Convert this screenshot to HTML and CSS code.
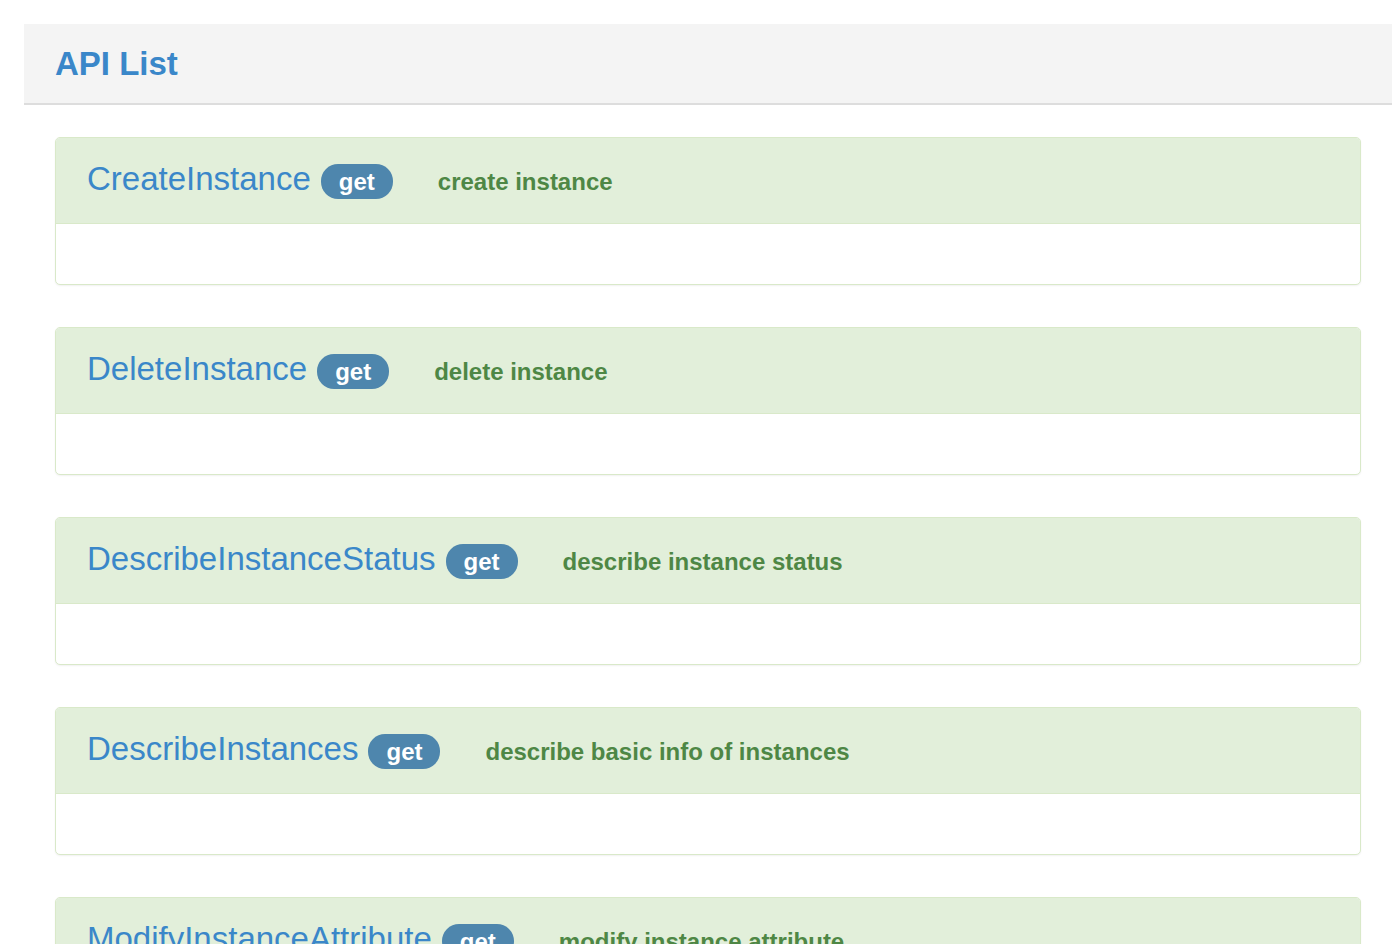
FILE: index.html
```html
<!DOCTYPE html>
<html>
<head>
<meta charset="utf-8">
<title>API List</title>
<link rel="stylesheet" href="styles.css">
</head>
<body>
<div class="page">
  <div class="header"><h1 class="header-title">API List</h1></div>
  <div class="list">
    <div class="panel">
      <div class="panel-heading">
        <span class="api-name">CreateInstance</span>
        <span class="badge">get</span>
        <span class="api-desc">create instance</span>
      </div>
      <div class="panel-body"></div>
    </div>
    <div class="panel">
      <div class="panel-heading">
        <span class="api-name">DeleteInstance</span>
        <span class="badge">get</span>
        <span class="api-desc">delete instance</span>
      </div>
      <div class="panel-body"></div>
    </div>
    <div class="panel">
      <div class="panel-heading">
        <span class="api-name">DescribeInstanceStatus</span>
        <span class="badge">get</span>
        <span class="api-desc">describe instance status</span>
      </div>
      <div class="panel-body"></div>
    </div>
    <div class="panel">
      <div class="panel-heading">
        <span class="api-name">DescribeInstances</span>
        <span class="badge">get</span>
        <span class="api-desc">describe basic info of instances</span>
      </div>
      <div class="panel-body"></div>
    </div>
    <div class="panel">
      <div class="panel-heading">
        <span class="api-name">ModifyInstanceAttribute</span>
        <span class="badge">get</span>
        <span class="api-desc">modify instance attribute</span>
      </div>
      <div class="panel-body"></div>
    </div>
  </div>
</div>
</body>
</html>
```
FILE: styles.css
```css
html, body {
  margin: 0;
  padding: 0;
  background: #ffffff;
  font-family: "Liberation Sans", Arial, Helvetica, sans-serif;
  overflow: hidden;
}
.page {
  padding: 24px 0 0 24px;
}
.header {
  background: #f4f4f4;
  border-bottom: 2px solid #dddddd;
  height: 79px;
  display: flex;
  align-items: center;
  padding-left: 31px;
}
.header-title {
  margin: 0;
  font-size: 33px;
  font-weight: bold;
  color: #3a87c9;
  line-height: 1;
}
.list {
  padding: 32px 31px 0 31px;
}
.panel {
  border: 1px solid #d9e9c9;
  border-radius: 5px;
  margin-bottom: 42px;
  box-shadow: 0 1px 2px rgba(0, 0, 0, 0.06);
  background: #ffffff;
  overflow: hidden;
}
.panel-heading {
  background: #e2efda;
  border-bottom: 1px solid #d9e9c9;
  display: flex;
  align-items: center;
  padding-left: 31px;
  padding-bottom: 4px;
  box-sizing: border-box;
  height: 86px;
}
.api-name {
  font-size: 33px;
  color: #3a87c9;
  line-height: 1;
}
.badge {
  margin-left: 10px;
  background: #4e86ad;
  color: #ffffff;
  font-weight: bold;
  font-size: 24px;
  line-height: 1;
  height: 35px;
  padding: 0 18px;
  border-radius: 17px;
  display: inline-flex;
  align-items: center;
  box-sizing: border-box;
  position: relative;
  top: 3px;
}
.api-desc {
  margin-left: 45px;
  font-size: 24px;
  font-weight: bold;
  color: #4e8745;
  position: relative;
  top: 3px;
}
.panel-body {
  height: 60px;
}
```
